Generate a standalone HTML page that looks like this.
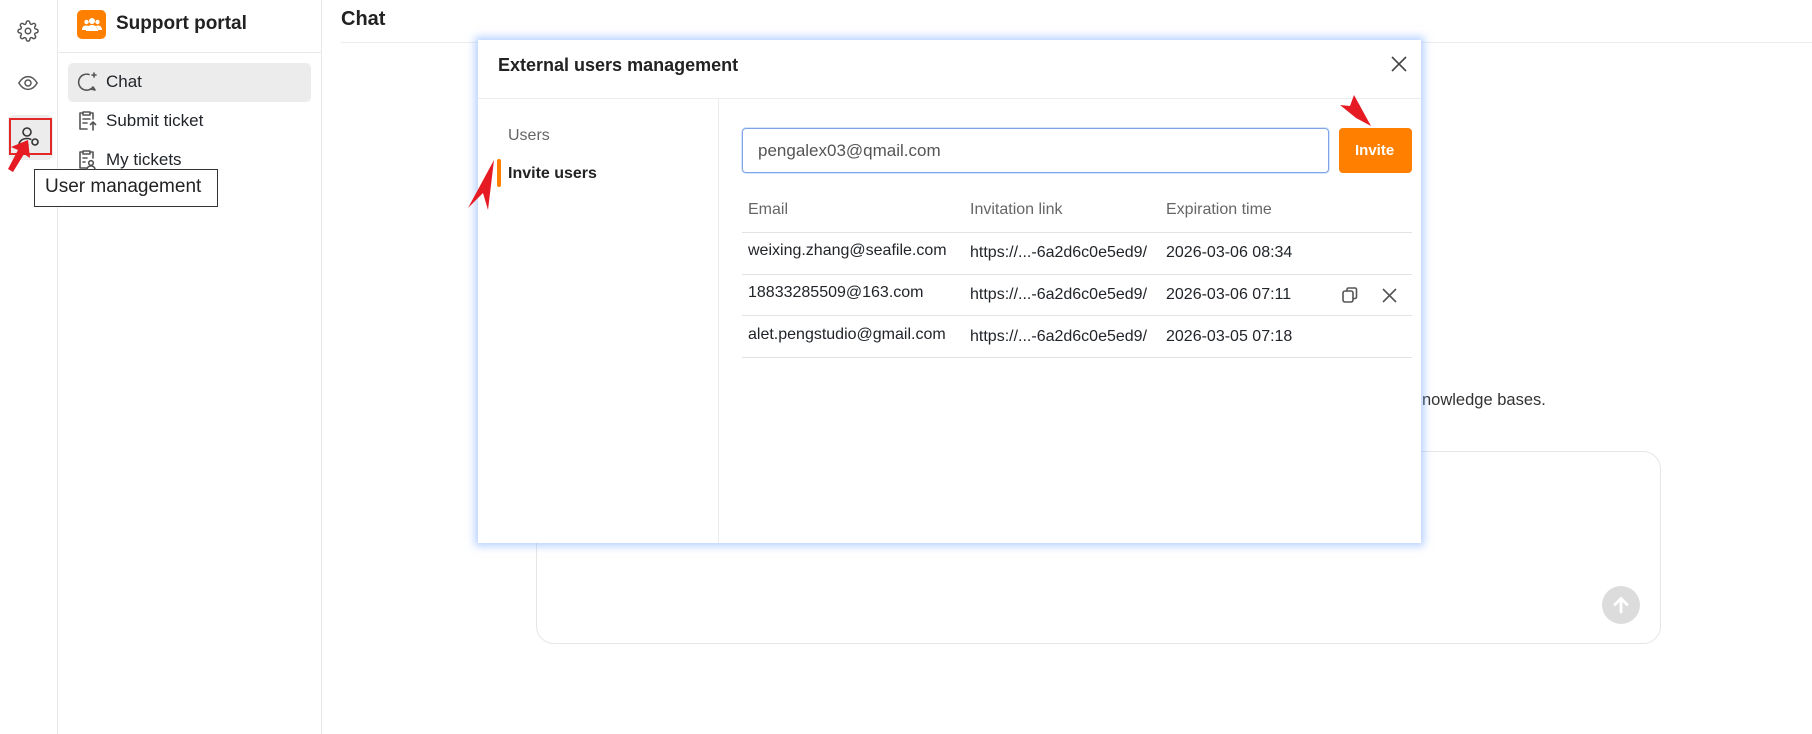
<!DOCTYPE html>
<html><head><meta charset="utf-8"><style>
*{box-sizing:border-box;margin:0;padding:0}
body{width:1812px;height:734px;overflow:hidden;background:#fff;font-family:"Liberation Sans",sans-serif;color:#212529;position:relative}
.abs{position:absolute}
.ico{stroke:#555;fill:none;stroke-width:1.6;stroke-linecap:round;stroke-linejoin:round}
.t{position:absolute;white-space:nowrap}
</style></head><body>
<!-- left icon bar -->
<div class="abs" style="left:57px;top:0;width:1px;height:734px;background:#e8e8e8"></div>
<svg class="abs" style="left:17px;top:20px" width="22" height="22" viewBox="0 0 24 24"><circle class="ico" cx="12" cy="12" r="3"/><path class="ico" d="M19.4 15a1.65 1.65 0 0 0 .33 1.82l.06.06a2 2 0 0 1-2.83 2.83l-.06-.06a1.65 1.65 0 0 0-1.82-.33 1.65 1.65 0 0 0-1 1.51V21a2 2 0 0 1-4 0v-.09A1.65 1.65 0 0 0 9 19.4a1.65 1.65 0 0 0-1.82.33l-.06.06a2 2 0 0 1-2.83-2.83l.06-.06a1.65 1.65 0 0 0 .33-1.82 1.65 1.65 0 0 0-1.51-1H3a2 2 0 0 1 0-4h.09A1.65 1.65 0 0 0 4.6 9a1.65 1.65 0 0 0-.33-1.82l-.06-.06a2 2 0 0 1 2.83-2.83l.06.06a1.65 1.65 0 0 0 1.82.33H9a1.65 1.65 0 0 0 1-1.51V3a2 2 0 0 1 4 0v.09a1.65 1.65 0 0 0 1 1.51 1.65 1.65 0 0 0 1.82-.33l.06-.06a2 2 0 0 1 2.83 2.83l-.06.06a1.65 1.65 0 0 0-.33 1.82V9a1.65 1.65 0 0 0 1.51 1H21a2 2 0 0 1 0 4h-.09a1.65 1.65 0 0 0-1.51 1z"/></svg>
<svg class="abs" style="left:17px;top:73px" width="22" height="20" viewBox="0 0 24 20"><path class="ico" d="M2 10c3-5 6.5-7 10-7s7 2 10 7c-3 5-6.5 7-10 7s-7-2-10-7z"/><circle class="ico" cx="12" cy="10" r="3.3"/></svg>
<div class="abs" style="left:8px;top:115px;width:45px;height:45px;background:#ececec;border-radius:6px"></div>
<div class="abs" style="left:9px;top:118px;width:43px;height:37px;border:2px solid #e32626;background:#ececec"></div>
<svg class="abs" style="left:17px;top:126px" width="24" height="22" viewBox="0 0 24 22"><circle class="ico" style="stroke:#333" cx="10" cy="6" r="4"/><path class="ico" style="stroke:#333" d="M2 19c0-4 3.5-6.5 8-6.5 1.5 0 2.8.3 3.8.8M2 19h9"/><circle class="ico" style="stroke:#333" cx="18" cy="16" r="3"/></svg>
<svg class="abs" style="left:5px;top:138px" width="30" height="36" viewBox="0 0 30 36"><path d="M23 2L25 20 19 16 8 34 3 31 13 12 6 9z" fill="#e51a22"/></svg>
<!-- tooltip -->
<div class="abs" style="left:34px;top:169px;width:184px;height:38px;border:1.5px solid #333;background:#fff"></div>
<div class="t" style="left:45px;top:176px;font-size:19px;color:#222">User management</div>
<!-- sidebar -->
<div class="abs" style="left:321px;top:0;width:1px;height:734px;background:#e8e8e8"></div>
<div class="abs" style="left:58px;top:52px;width:263px;height:1px;background:#e8e8e8"></div>
<div class="abs" style="left:77px;top:10px;width:29px;height:29px;background:#ff8000;border-radius:5px"></div>
<svg class="abs" style="left:82px;top:16px" width="20" height="16" viewBox="0 0 20 16"><circle cx="10" cy="5" r="3" fill="#fff"/><circle cx="4.5" cy="6" r="2.2" fill="#fff"/><circle cx="15.5" cy="6" r="2.2" fill="#fff"/><path d="M4 15c0-4 2.5-6 6-6s6 2 6 6z M0 14c0-3 1.8-4.5 4-4.5 1 0 1.5.3 2 .6L4 14z M20 14c0-3-1.8-4.5-4-4.5-1 0-1.5.3-2 .6L16 14z" fill="#fff"/></svg>
<div class="t" style="left:116px;top:13px;font-size:19px;font-weight:bold;color:#222">Support portal</div>
<div class="abs" style="left:68px;top:63px;width:243px;height:39px;background:#ececec;border-radius:5px"></div>
<svg class="abs" style="left:76px;top:71px" width="22" height="22" viewBox="0 0 22 22"><path class="ico" d="M13 3.5A8 8 0 1 0 17 16l2 3-4.5-1"/><path class="ico" d="M18 2v4M16 4h4"/></svg>
<div class="t" style="left:106px;top:72px;font-size:17px">Chat</div>
<svg class="abs" style="left:76px;top:110px" width="22" height="22" viewBox="0 0 22 22"><path class="ico" d="M7 3h-3v16h7M14 3h3v6M7 2h7v3H7z M7 9h7M7 13h4M17 12v8M14.5 14.5L17 12l2.5 2.5"/></svg>
<div class="t" style="left:106px;top:111px;font-size:17px">Submit ticket</div>
<svg class="abs" style="left:76px;top:149px" width="22" height="22" viewBox="0 0 22 22"><path class="ico" d="M7 3h-3v16h7M14 3h3v6M7 2h7v3H7z M7 9h4M7 13h2"/><circle class="ico" cx="15" cy="14" r="2.3"/><path class="ico" d="M11 20c.5-2 2-3 4-3s3.5 1 4 3"/></svg>
<div class="t" style="left:106px;top:150px;font-size:17px">My tickets</div>
<!-- main -->
<div class="t" style="left:341px;top:8px;font-size:20px;font-weight:bold;color:#222">Chat</div>
<div class="abs" style="left:341px;top:42px;width:1471px;height:1px;background:#ececec"></div>
<div class="t" style="left:1422px;top:391px;font-size:16.5px;color:#333">nowledge bases.</div>
<div class="abs" style="left:536px;top:451px;width:1125px;height:193px;border:1.5px solid #e6e6e6;border-radius:18px"></div>
<div class="abs" style="left:1602px;top:586px;width:38px;height:38px;border-radius:50%;background:#dcdcdc"></div>
<svg class="abs" style="left:1609px;top:593px" width="24" height="24" viewBox="0 0 24 24"><path d="M12 19V6M6 11.5l6-6 6 6" stroke="#fff" stroke-width="2.8" fill="none" stroke-linecap="round"/></svg>
<!-- modal -->
<div class="abs" style="left:478px;top:40px;width:943px;height:503px;background:#fff;box-shadow:0 0 8px 3px rgba(120,170,255,.55)"></div>
<div class="t" style="left:498px;top:55px;font-size:18px;font-weight:bold;color:#222">External users management</div>
<svg class="abs" style="left:1390px;top:55px" width="18" height="18" viewBox="0 0 18 18"><path d="M2 2l14 14M16 2L2 16" stroke="#444" stroke-width="1.6"/></svg>
<div class="abs" style="left:478px;top:98px;width:943px;height:1px;background:#ececec"></div>
<div class="abs" style="left:718px;top:99px;width:1px;height:444px;background:#ececec"></div>
<div class="t" style="left:508px;top:127px;font-size:16px;color:#666">Users</div>
<div class="abs" style="left:497px;top:159px;width:4px;height:28px;background:#ff8000;border-radius:2px"></div>
<div class="t" style="left:508px;top:165px;font-size:16px;font-weight:bold;color:#222">Invite users</div>
<svg class="abs" style="left:466px;top:158px" width="30" height="54" viewBox="0 0 30 54"><path d="M28 2L22 52 17 35 2 50z" fill="#e51a22"/></svg>
<div class="abs" style="left:742px;top:128px;width:587px;height:45px;border:1.5px solid #7fa4e6;border-radius:4px;box-shadow:0 0 0 1px #d6e4fb"></div>
<div class="t" style="left:758px;top:141px;font-size:17px;color:#555">pengalex03@qmail.com</div>
<div class="abs" style="left:1339px;top:128px;width:73px;height:45px;background:#ff8000;border-radius:4px"></div>
<div class="t" style="left:1355px;top:142px;font-size:15px;font-weight:bold;color:#fff">Invite</div>
<svg class="abs" style="left:1338px;top:93px" width="36" height="34" viewBox="0 0 36 34"><path d="M16 2L33 33 18 25 2 12 12 13z" fill="#e51a22"/></svg>
<div class="t" style="left:748px;top:201px;font-size:16px;color:#666">Email</div>
<div class="t" style="left:970px;top:201px;font-size:16px;color:#666">Invitation link</div>
<div class="t" style="left:1166px;top:201px;font-size:16px;color:#666">Expiration time</div>
<div class="abs" style="left:742px;top:232px;width:670px;height:1px;background:#e2e2e2"></div>
<div class="abs" style="left:742px;top:274px;width:670px;height:1px;background:#e2e2e2"></div>
<div class="abs" style="left:742px;top:315px;width:670px;height:1px;background:#e2e2e2"></div>
<div class="abs" style="left:742px;top:357px;width:670px;height:1px;background:#e2e2e2"></div>
<div class="t" style="left:748px;top:242px;font-size:16px">weixing.zhang@seafile.com</div>
<div class="t" style="left:970px;top:244px;font-size:16px">https://...-6a2d6c0e5ed9/</div>
<div class="t" style="left:1166px;top:244px;font-size:16px">2026-03-06 08:34</div>
<div class="t" style="left:748px;top:284px;font-size:16px">18833285509@163.com</div>
<div class="t" style="left:970px;top:286px;font-size:16px">https://...-6a2d6c0e5ed9/</div>
<div class="t" style="left:1166px;top:286px;font-size:16px">2026-03-06 07:11</div>
<svg class="abs" style="left:1340px;top:285px" width="20" height="20" viewBox="0 0 20 20"><rect x="3" y="6" width="10" height="11" rx="2" class="ico"/><path class="ico" d="M7 6V4.5A1.5 1.5 0 0 1 8.5 3H15a1.5 1.5 0 0 1 1.5 1.5V12A1.5 1.5 0 0 1 15 13.5h-2"/></svg>
<svg class="abs" style="left:1381px;top:287px" width="17" height="17" viewBox="0 0 17 17"><path d="M2 2l13 13M15 2L2 15" stroke="#555" stroke-width="1.6"/></svg>
<div class="t" style="left:748px;top:326px;font-size:16px">alet.pengstudio@gmail.com</div>
<div class="t" style="left:970px;top:328px;font-size:16px">https://...-6a2d6c0e5ed9/</div>
<div class="t" style="left:1166px;top:328px;font-size:16px">2026-03-05 07:18</div>
</body></html>
